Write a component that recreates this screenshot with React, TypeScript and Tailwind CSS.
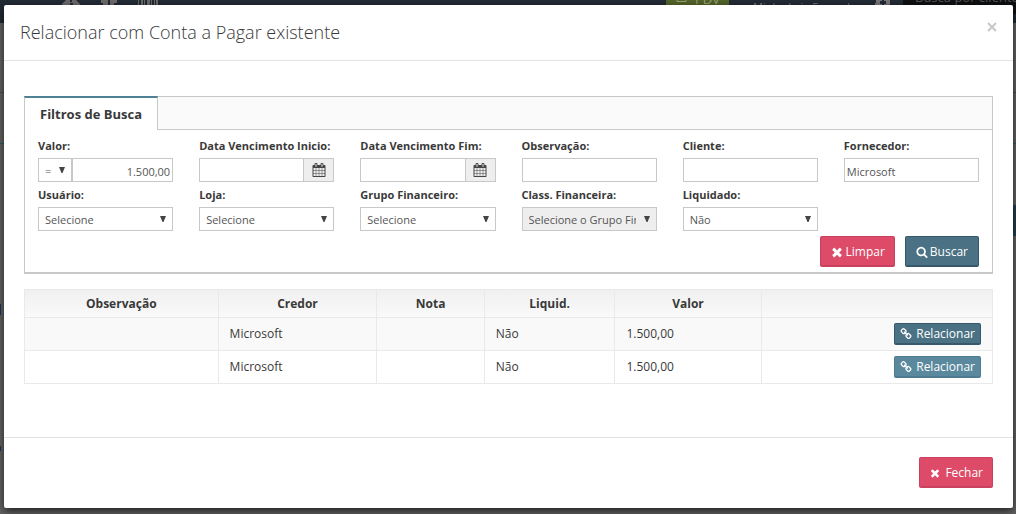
import React from 'react';

const ICONS = {
  times:
    'M1490 1322q0 40-28 68l-136 136q-28 28-68 28t-68-28l-294-294-294 294q-28 28-68 28t-68-28l-136-136q-28-28-28-68t28-68l294-294-294-294q-28-28-28-68t28-68l136-136q28-28 68-28t68 28l294 294 294-294q28-28 68-28t68 28l136 136q28 28 28 68t-28 68l-294 294 294 294q28 28 28 68z',
  search:
    'M1216 832q0-185-131.5-316.5t-316.5-131.5-316.5 131.5-131.5 316.5 131.5 316.5 316.5 131.5 316.5-131.5 131.5-316.5zm512 832q0 52-38 90t-90 38q-54 0-90-38l-343-342q-179 124-399 124-143 0-273.5-55.5t-225-150-150-225-55.5-273.5 55.5-273.5 150-225 225-150 273.5-55.5 273.5 55.5 225 150 150 225 55.5 273.5q0 220-124 399l343 343q37 37 37 90z',
  calendar:
    'M192 1664h288v-288h-288v288zm352 0h320v-288h-320v288zm-352-352h288v-320h-288v320zm352 0h320v-320h-320v320zm-352-384h288v-288h-288v288zm736 736h320v-288h-320v288zm-384-736h320v-288h-320v288zm768 736h288v-288h-288v288zm-384-352h320v-320h-320v320zm-352-864v-288q0-13-9.5-22.5t-22.5-9.5h-64q-13 0-22.5 9.5t-9.5 22.5v288q0 13 9.5 22.5t22.5 9.5h64q13 0 22.5-9.5t9.5-22.5zm736 864h288v-320h-288v320zm-384-384h320v-288h-320v288zm384 0h288v-288h-288v288zm32-480v-288q0-13-9.5-22.5t-22.5-9.5h-64q-13 0-22.5 9.5t-9.5 22.5v288q0 13 9.5 22.5t22.5 9.5h64q13 0 22.5-9.5t9.5-22.5zm384-64v1280q0 52-38 90t-90 38h-1408q-52 0-90-38t-38-90v-1280q0-52 38-90t90-38h128v-96q0-66 47-113t113-47h64q66 0 113 47t47 113v96h384v-96q0-66 47-113t113-47h64q66 0 113 47t47 113v96h128q52 0 90 38t38 90z',
  link: 'M1520 1216q0-40-28-68l-208-208q-28-28-68-28-42 0-72 32 3 3 19 18.5t21.5 21.5 15 19 13 25.5 3.500 27.5q0 40-28 68t-68 28q-15 0-27.5-3.5t-25.5-13-19-15-21.5-21.5-18.5-19q-33 31-33 73 0 40 28 68l206 207q27 27 68 27 40 0 68-26l147-146q28-28 28-67zm-703-705q0-40-28-68l-206-207q-28-28-68-28-39 0-68 27l-147 146q-28 28-28 67 0 40 28 68l208 208q27 27 68 27 42 0 72-31-3-3-19-18.5t-21.5-21.5-15-19-13-25.5-3.5-27.5q0-40 28-68t68-28q15 0 27.5 3.5t25.5 13 19 15 21.5 21.5 18.5 19q33-31 33-73zm895 705q0 120-85 203l-147 146q-83 83-203 83-121 0-204-85l-206-207q-83-83-83-203 0-123 88-209l-88-88q-86 88-208 88-120 0-204-84l-208-208q-84-84-84-204t85-203l147-146q83-83 203-83 121 0 204 85l206 207q83 83 83 203 0 123-88 209l88 88q86-88 208-88 120 0 204 84l208 208q84 84 84 204z',
};

interface IconProps {
  name: keyof typeof ICONS;
  className?: string;
}

const Icon: React.FC<IconProps> = ({ name, className = 'size-[14px]' }) => (
  <svg viewBox="0 0 1792 1792" className={`shrink-0 ${className}`} fill="currentColor" aria-hidden>
    <path d={ICONS[name]} />
  </svg>
);

const inputClass =
  'block h-6 w-full min-w-0 rounded-none border border-[#c8c8c8] bg-white px-[2px] pt-[2px] text-[11px] text-[#555] outline-none';

interface FieldProps {
  id: string;
  label: string;
  children: React.ReactNode;
}

const Field: React.FC<FieldProps> = ({ id, label, children }) => (
  <div className="px-[13px]">
    <label htmlFor={id} className="block h-[25px] whitespace-nowrap pt-1 text-[11px] leading-[18px] font-bold text-[#393939]">
      {label}
    </label>
    {children}
  </div>
);

interface SelectProps {
  id: string;
  value: string;
  disabled?: boolean;
  compact?: boolean;
}

const Select: React.FC<SelectProps> = ({ id, value, disabled = false, compact = false }) => (
  <div className={compact ? 'relative w-[34px] shrink-0' : 'relative'}>
    <select
      id={id}
      disabled={disabled}
      aria-label={compact ? 'Comparador' : undefined}
      className={`block h-6 w-full appearance-none rounded-none border border-[#c8c8c8] pt-[2px] pl-[6px] text-[11px] text-[#555] opacity-100 outline-none ${
        compact ? 'pr-3' : 'pr-5'
      } ${disabled ? 'bg-[#eee]' : 'bg-white'}`}
    >
      <option>{value}</option>
    </select>
    <svg viewBox="0 0 6 6" className="pointer-events-none absolute top-[9px] right-[7px] size-[6px]" fill="#444" aria-hidden>
      <path d="M0 0H6L3.5 6H2.5Z" />
    </svg>
  </div>
);

const DateInput: React.FC<{ id: string }> = ({ id }) => (
  <div className="flex">
    <input id={id} type="text" className={inputClass} />
    <button
      type="button"
      aria-label="Abrir calendário"
      className="flex h-6 w-[30px] shrink-0 items-center justify-center border border-l-0 border-[#c8c8c8] bg-[#eee] text-[#444]"
    >
      <Icon name="calendar" />
    </button>
  </div>
);

const buttonBase =
  'inline-flex items-center justify-center whitespace-nowrap rounded-xs border border-b-2 pt-px text-[12px] text-white';
const buttonRed = 'border-[#c9415f] bg-[#dd4b68]';
const buttonDark = 'border-[#35596a] bg-[#4a7284]';
const buttonLight = 'border-[#4c7d92] bg-[#5a899e]';

const rows = [
  { observacao: '', credor: 'Microsoft', nota: '', liquid: 'Não', valor: '1.500,00', active: true },
  { observacao: '', credor: 'Microsoft', nota: '', liquid: 'Não', valor: '1.500,00', active: false },
];

const headers = [
  { title: 'Observação', width: 'w-[20%]' },
  { title: 'Credor', width: 'w-[16.4%]' },
  { title: 'Nota', width: 'w-[11.1%]' },
  { title: 'Liquid.', width: 'w-[13.5%]' },
  { title: 'Valor', width: 'w-[15.1%]' },
  { title: '', width: 'w-[23.9%]' },
];

const cellClass = 'border border-[#e9e9e9] px-[11px]';

// Page under the modal, already dimmed by the backdrop
const PageBehind = () => (
  <div className="absolute inset-0 overflow-hidden bg-[#646464]" aria-hidden>
    <div className="flex h-[23px] items-start bg-[#222a34]">
      <div className="ml-[62px] flex gap-5 text-[#6d6b69]">
        <svg viewBox="0 0 18 6" className="h-[6px] w-[18px]" fill="currentColor">
          <path fillRule="evenodd" d="M4 0H14L18 4V6H0V4ZM8 0V2H10V0ZM8 3V6H11V3Z" />
        </svg>
        <svg viewBox="0 0 18 6" className="h-[6px] w-[18px]" fill="currentColor">
          <path d="M1 0H8V6H3V3H1ZM10 0H17V3H14V6H10Z" />
        </svg>
        <svg viewBox="0 0 20 6" className="h-[6px] w-5" fill="currentColor">
          <path d="M0 0H1V6H0ZM3 0H5V6H3ZM6 0H7V6H6ZM9 0H12V6H9ZM13 0H14V6H13ZM16 0H17V6H16ZM18 0H20V6H18Z" />
        </svg>
      </div>
      <div className="ml-auto flex h-[23px] w-[350px]">
        <div className="flex w-[63px] gap-2 bg-[#536429] pl-[10px] text-[13px] leading-[22px] text-[#98a17c]">
          <svg viewBox="0 0 11 3" className="h-[3px] w-[11px]" fill="none" stroke="currentColor">
            <path d="M1 0V1.5H10V0" />
          </svg>
          <span className="-mt-3">PDV</span>
        </div>
        <span className="mt-px ml-6 flex-1 text-[11px] leading-[11px] text-[#777]">Minha Loja Exemplo</span>
        <svg viewBox="0 0 16 6" className="mr-3 h-[6px] w-4" fill="#777">
          <path fillRule="evenodd" d="M1 0H15V6H0V3H1ZM5 1V4H7V6H9V4H11V1H9V0H7V1Z" />
        </svg>
        <div className="h-[14px] w-[113px] overflow-hidden whitespace-nowrap bg-[#0e1012] pl-3 text-[13px] text-[#555]">
          <span className="-mt-3 block">Busca por cliente</span>
        </div>
      </div>
    </div>
    <div className="mt-[69px] flex h-[52px] flex-col justify-between border-y border-t-[#505050] border-b-[#335a6c]" />
    <div className="mt-[61px] ml-auto h-[31px] w-2 bg-[#24424f]" />
    <div className="mt-[68px] h-[11px] w-px bg-[#17365a]" />
    <div className="mt-[131px] h-[5px] w-px bg-[#17365a]" />
  </div>
);

export default function App() {
  return (
    <div className="relative min-h-screen pt-[5px] pr-[3px] pb-[6px] pl-1 font-['Open_Sans',sans-serif] text-[#393939]">
      <PageBehind />
      <div
        role="dialog"
        aria-labelledby="modal-title"
        className="relative rounded-xs bg-white shadow-[0_3px_9px_rgba(0,0,0,0.7)]"
      >
        <header className="flex h-14 items-start justify-between border-b border-[#e2e2e2] px-4 pt-[13px]">
          <h4 id="modal-title" className="text-[18px] leading-7 font-light">
            Relacionar com Conta a Pagar existente
          </h4>
          <button type="button" aria-label="Fechar janela" className="mt-1 text-[#c8c8c8]">
            <svg viewBox="0 0 10 10" className="size-[10px]" fill="none" stroke="currentColor" strokeWidth="2" aria-hidden>
              <path d="M1 1L9 9M9 1L1 9" />
            </svg>
          </button>
        </header>

        <main className="px-5 pt-[35px] pb-[53px]">
          <section className="border border-b-2 border-[#c8c8c8]">
            <div className="-mt-px -ml-px flex h-[34px]" role="tablist">
              <button
                type="button"
                role="tab"
                aria-selected="true"
                className="border-x border-t-2 border-x-[#c8c8c8] border-t-[#4f8194] px-[15px] pt-px text-[13px] font-bold"
              >
                Filtros de Busca
              </button>
              <div className="flex-1 border-y border-[#c8c8c8] bg-[#fafafa]" />
            </div>

            <form className="pt-[3px] pb-[5px]" onSubmit={(e) => e.preventDefault()}>
              <div className="grid grid-cols-6">
                <Field id="valor" label="Valor:">
                  <div className="flex">
                    <Select id="comparador" value="=" compact />
                    <input id="valor" type="text" defaultValue="1.500,00" className={`${inputClass} text-right`} />
                  </div>
                </Field>
                <Field id="inicio" label="Data Vencimento Inicio:">
                  <DateInput id="inicio" />
                </Field>
                <Field id="fim" label="Data Vencimento Fim:">
                  <DateInput id="fim" />
                </Field>
                <Field id="observacao" label="Observação:">
                  <input id="observacao" type="text" className={inputClass} />
                </Field>
                <Field id="cliente" label="Cliente:">
                  <input id="cliente" type="text" className={inputClass} />
                </Field>
                <Field id="fornecedor" label="Fornecedor:">
                  <input id="fornecedor" type="text" defaultValue="Microsoft" className={inputClass} />
                </Field>
                <Field id="usuario" label="Usuário:">
                  <Select id="usuario" value="Selecione" />
                </Field>
                <Field id="loja" label="Loja:">
                  <Select id="loja" value="Selecione" />
                </Field>
                <Field id="grupo" label="Grupo Financeiro:">
                  <Select id="grupo" value="Selecione" />
                </Field>
                <Field id="classe" label="Class. Financeira:">
                  <Select id="classe" value="Selecione o Grupo Financeiro" disabled />
                </Field>
                <Field id="liquidado" label="Liquidado:">
                  <Select id="liquidado" value="Não" />
                </Field>
              </div>
              <div className="mt-[5px] flex justify-end gap-[10px] px-[13px]">
                <button type="reset" className={`${buttonBase} ${buttonRed} h-[31px] gap-[2px] px-[9px]`}>
                  <Icon name="times" />
                  Limpar
                </button>
                <button type="submit" className={`${buttonBase} ${buttonDark} h-[31px] gap-[2px] px-[10px]`}>
                  <Icon name="search" className="size-3" />
                  Buscar
                </button>
              </div>
            </form>
          </section>

          <table className="mt-[15px] w-full table-fixed border-collapse text-[12px]">
            <thead>
              <tr className="h-7 bg-linear-to-b from-[#f0f0f0] to-[#fafafa]">
                {headers.map((h, i) => (
                  <th key={i} className={`border border-[#e9e9e9] font-bold ${h.width}`}>
                    {h.title}
                  </th>
                ))}
              </tr>
            </thead>
            <tbody>
              {rows.map((row, i) => (
                <tr key={i} className="h-[33px] odd:bg-[#f9f9f9]">
                  <td className={cellClass}>{row.observacao}</td>
                  <td className={cellClass}>{row.credor}</td>
                  <td className={cellClass}>{row.nota}</td>
                  <td className={cellClass}>{row.liquid}</td>
                  <td className={cellClass}>{row.valor}</td>
                  <td className={`${cellClass} text-right`}>
                    <button
                      type="button"
                      className={`${buttonBase} ${row.active ? buttonDark : buttonLight} h-[22px] gap-1 px-[5px] align-middle`}
                    >
                      <Icon name="link" className="size-3" />
                      Relacionar
                    </button>
                  </td>
                </tr>
              ))}
            </tbody>
          </table>
        </main>

        <footer className="flex justify-end border-t border-[#e2e2e2] px-5 pt-[19px] pb-5">
          <button type="button" className={`${buttonBase} ${buttonRed} h-[31px] gap-1 px-[9px]`}>
            <Icon name="times" className="size-3" />
            Fechar
          </button>
        </footer>
      </div>
    </div>
  );
}
